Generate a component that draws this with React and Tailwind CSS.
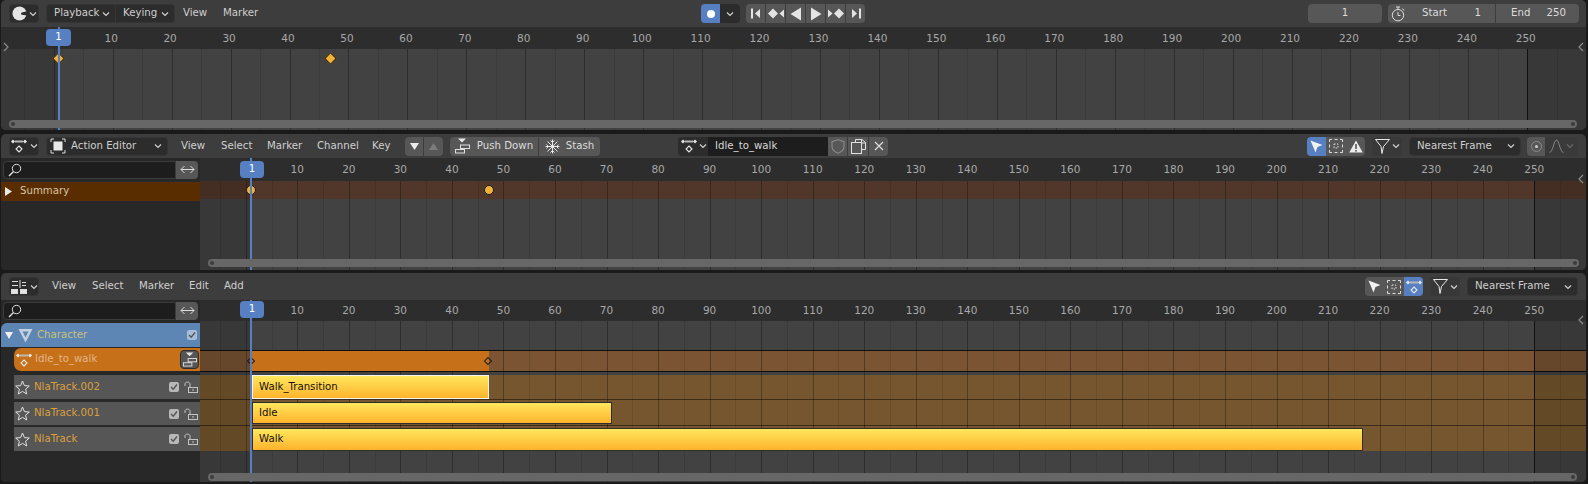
import React from "react";

const range = (a, b, step) => {
  const out = [];
  for (let i = a; i <= b; i += step) out.push(i);
  return out;
};

const Chevron = ({ className = "" }) => (
  <svg width="8" height="6" viewBox="0 0 8 6" className={className} fill="none" stroke="#d0d0d0" strokeWidth="1.2">
    <path d="M1 1.5 L4 4.5 L7 1.5" />
  </svg>
);

const ClockIcon = () => (
  <svg width="15" height="15" viewBox="0 0 16 16">
    <circle cx="8" cy="8" r="7.5" fill="#e4e4e4" />
    <path d="M16 5.5 L10.5 7 C9.3 7.5 9.3 8.8 10.5 9.3 L16 10 Z" fill="#2c2c2c" />
  </svg>
);

const DopeIcon = () => (
  <svg width="18" height="16" viewBox="0 0 18 16">
    <path d="M3 1.5 L5 3.5 L3 5.5 L1 3.5 Z M15 1.5 L17 3.5 L15 5.5 L13 3.5 Z" fill="#e6e6e6" />
    <rect x="5" y="2.5" width="8" height="2" fill="#b8b8b8" />
    <path d="M9 8 L12 11 L9 14 L6 11 Z" fill="none" stroke="#e6e6e6" strokeWidth="1.1" />
  </svg>
);

const NlaIcon = () => (
  <svg width="18" height="16" viewBox="0 0 18 16" fill="none" stroke="#dcdcdc" strokeWidth="1">
    <path d="M2 2.5 H8 M2 6.5 H8 M10 1 V9 M12 3.5 H16 M12 6.5 H16" />
    <rect x="1.5" y="10.5" width="6" height="4" fill="#e4e4e4" />
    <rect x="10.5" y="10.5" width="6" height="4" fill="#e4e4e4" />
  </svg>
);

const ActionEditorIcon = () => (
  <svg width="16" height="16" viewBox="0 0 16 16" fill="none" stroke="#dcdcdc" strokeWidth="1">
    <path d="M1 4 V1 H4 M12 1 H15 V4 M15 12 V15 H12 M4 15 H1 V12" />
    <rect x="3.5" y="3.5" width="9" height="9" fill="#e8e8e8" stroke="none" />
  </svg>
);

const Stopwatch = () => (
  <svg width="14" height="16" viewBox="0 0 14 16" fill="none" stroke="#dedede" strokeWidth="1">
    <circle cx="7" cy="9.2" r="5.7" />
    <path d="M5 1 H9 M7 1 V3.5 M7 6 V9.5 H9.5 M11.5 2.5 L13 4.5" />
  </svg>
);

const Search = () => (
  <svg width="14" height="14" viewBox="0 0 14 14" fill="none" stroke="#e0e0e0" strokeWidth="1">
    <circle cx="8.5" cy="5.5" r="4.2" />
    <path d="M5.5 8.5 L1 13" strokeWidth="1.4" />
  </svg>
);

const Swap = () => (
  <svg width="15" height="9" viewBox="0 0 15 9" fill="none" stroke="#dcdcdc" strokeWidth="1">
    <path d="M1 4.5 H14 M4.5 1 L1 4.5 L4.5 8 M10.5 1 L14 4.5 L10.5 8" />
  </svg>
);

const PushDownIcon = ({ small }) => (
  <svg width={small ? 14 : 15} height={small ? 15 : 16} viewBox="0 0 15 16" fill="none" stroke="#e0e0e0" strokeWidth="1">
    <path d="M3 0.5 H11 L7 4.5 Z" fill="#e8e8e8" stroke="none" />
    <rect x="5.5" y="7" width="9" height="3.5" />
    <rect x="0.5" y="11.5" width="9" height="3.5" />
  </svg>
);

const StashIcon = () => (
  <svg width="15" height="15" viewBox="0 0 15 15" fill="none" stroke="#e8e8e8" strokeWidth="1">
    <path d="M7.5 0.5 V14.5 M0.5 7.5 H14.5 M2.5 2.5 L12.5 12.5 M12.5 2.5 L2.5 12.5 M5.5 1.5 L7.5 3.5 L9.5 1.5 M5.5 13.5 L7.5 11.5 L9.5 13.5 M1.5 5.5 L3.5 7.5 L1.5 9.5 M13.5 5.5 L11.5 7.5 L13.5 9.5" />
  </svg>
);

const Shield = () => (
  <svg width="14" height="15" viewBox="0 0 14 15" fill="none" stroke="#8a8a8a" strokeWidth="1.1">
    <path d="M7 0.8 L13 2.6 V7.5 C13 11 10 13 7 14.2 C4 13 1 11 1 7.5 V2.6 Z" />
  </svg>
);

const CopyIcon = () => (
  <svg width="15" height="15" viewBox="0 0 15 15" fill="none" stroke="#e0e0e0" strokeWidth="1">
    <path d="M4.5 3.5 V0.5 H11 L14.5 3.5 V10.5 H10.5 M10.5 0.5 V4 H14.5" />
    <rect x="0.5" y="3.5" width="10" height="11" />
  </svg>
);

const Cross = () => (
  <svg width="10" height="10" viewBox="0 0 10 10" fill="none" stroke="#e0e0e0" strokeWidth="1.1">
    <path d="M1 1 L9 9 M9 1 L1 9" />
  </svg>
);

const Cursor = () => (
  <svg width="13" height="13" viewBox="0 0 13 13">
    <path d="M0.5 0.5 L12.5 5 L7.5 7 L5.5 12.5 Z" fill="#f2f2f2" />
  </svg>
);

const BoxSelect = () => (
  <svg width="14" height="14" viewBox="0 0 14 14" fill="none" stroke="#dcdcdc" strokeWidth="1">
    <path d="M0.5 3 V0.5 H3 M5.5 0.5 H8.5 M11 0.5 H13.5 V3 M13.5 5.5 V8.5 M13.5 11 V13.5 H11 M8.5 13.5 H5.5 M3 13.5 H0.5 V11 M0.5 8.5 V5.5" />
    <path d="M5 5 H9 V9 H5 Z" strokeDasharray="1.5 1.5" />
  </svg>
);

const Warning = () => (
  <svg width="14" height="13" viewBox="0 0 14 13">
    <path d="M7 0.5 L13.8 12.5 H0.2 Z" fill="#ececec" />
    <rect x="6.2" y="4" width="1.6" height="5" fill="#555555" />
    <rect x="6.2" y="10" width="1.6" height="1.6" fill="#555555" />
  </svg>
);

const Funnel = () => (
  <svg width="15" height="15" viewBox="0 0 15 15" fill="none" stroke="#e8e8e8" strokeWidth="1">
    <path d="M0.5 0.5 H14.5 L8.5 7.5 L7 14.5 L6 7.5 Z" />
  </svg>
);

const Falloff = () => (
  <svg width="15" height="14" viewBox="0 0 15 14" fill="none" stroke="#9a9a9a" strokeWidth="1">
    <path d="M0.5 13.5 C4 13 5 1 7.5 1 C10 1 11 13 14.5 13.5" />
  </svg>
);

const Star = () => (
  <svg width="15" height="15" viewBox="0 0 15 15" fill="none" stroke="#e2e2e2" strokeWidth="1">
    <path d="M7.5 1 L9.4 5.6 L14.3 6 L10.6 9.2 L11.7 14 L7.5 11.4 L3.3 14 L4.4 9.2 L0.7 6 L5.6 5.6 Z" />
  </svg>
);

const Lock = () => (
  <svg width="14" height="12" viewBox="0 0 14 12" fill="none" stroke="#c4c4c4" strokeWidth="1">
    <path d="M1 5 V3 C1 0.5 6 0.5 6 3 V6" />
    <rect x="4.5" y="6.5" width="9" height="5" />
    <rect x="8" y="8.5" width="2" height="1" fill="#c4c4c4" stroke="none" />
  </svg>
);

const Check = ({ dim }) => (
  <div className={`w-[10px] h-[10px] rounded-[2px] flex items-center justify-center ${dim ? "bg-[#a6bcd8]" : "bg-[#b8b8b8]"}`}>
    <svg width="8" height="8" viewBox="0 0 8 8" fill="none" stroke="#555555" strokeWidth="1.4">
      <path d="M1 4 L3.2 6.2 L7 1.5" />
    </svg>
  </div>
);

const MeshIcon = () => (
  <svg width="15" height="15" viewBox="0 0 15 15">
    <path d="M0.5 1 H14.5 L7.5 14.5 Z" fill="#c6d0dc" />
    <path d="M4.5 3.5 H10.5 L7.5 9.5 Z" fill="#5d86b5" />
  </svg>
);

const white = "#e4e4e4";
const JumpStart = () => (
  <svg width="12" height="11" viewBox="0 0 12 11" fill={white}>
    <rect x="1" y="0.5" width="2" height="10" />
    <path d="M10 1 V10 L5 5.5 Z" />
  </svg>
);
const PrevKey = () => (
  <svg width="16" height="11" viewBox="0 0 16 11" fill={white}>
    <path d="M5 0.5 L10 5.5 L5 10.5 L0 5.5 Z" />
    <path d="M16 1.5 V9.5 L11.5 5.5 Z" />
  </svg>
);
const PlayBack = () => (
  <svg width="12" height="14" viewBox="0 0 12 14" fill={white}>
    <path d="M11 0.5 V13.5 L0.5 7 Z" />
  </svg>
);
const PlayFwd = () => (
  <svg width="12" height="14" viewBox="0 0 12 14" fill={white}>
    <path d="M1 0.5 V13.5 L11.5 7 Z" />
  </svg>
);
const NextKey = () => (
  <svg width="16" height="11" viewBox="0 0 16 11" fill={white}>
    <path d="M11 0.5 L16 5.5 L11 10.5 L6 5.5 Z" />
    <path d="M0 1.5 V9.5 L4.5 5.5 Z" />
  </svg>
);
const JumpEnd = () => (
  <svg width="12" height="11" viewBox="0 0 12 11" fill={white}>
    <rect x="9" y="0.5" width="2" height="10" />
    <path d="M2 1 V10 L7 5.5 Z" />
  </svg>
);

const EditorBtn = ({ icon }) => (
  <div className="w-[30px] h-[19px] rounded-[4px] bg-[#2c2c2c] border border-[#353535] flex items-center justify-center gap-[2px] ml-[8px] shrink-0">
    {icon}
    <Chevron />
  </div>
);

const Menu = ({ items }) => (
  <div className="flex text-[#cfcfcf]">
    {items.map(([label, w]) => (
      <span key={label} className="block" style={{ width: w }}>{label}</span>
    ))}
  </div>
);

const Dropdown = ({ children, className = "" }) => (
  <div className={`h-[19px] bg-[#2c2c2c] border border-[#353535] flex items-center justify-between pr-[5px] text-[#cfcfcf] ${className}`}>
    {children}
    <Chevron />
  </div>
);

const Gray = ({ children, className = "" }) => (
  <div className={`h-[19px] bg-[#575757] flex items-center justify-center text-[#dcdcdc] ${className}`}>{children}</div>
);

// number field: label left, value right
const Field = ({ label, value, className = "" }) => (
  <div className={`h-[19px] bg-[#575757] flex items-center justify-between text-[#dcdcdc] ${className}`}>
    <span>{label}</span>
    <span>{value}</span>
  </div>
);

const SideArrow = ({ left, className }) => (
  <svg width="6" height="10" viewBox="0 0 6 10" fill="none" stroke="#8a8a8a" strokeWidth="1.2" className={`absolute z-40 ${className}`}>
    <path d={left ? "M5 1 L1 5 L5 9" : "M1 1 L5 5 L1 9"} />
  </svg>
);

// ruler labels, grid lines and range shading on one timeline
const Timeline = ({ origin, scale, start, rulerH, playX, badgeL, badgeW, badgeT, labelShift = 0, children }) => {
  const fx = (f) => origin + f * scale - start;
  const inX = fx(1);
  const outX = fx(250);
  return (
    <div className="relative h-full overflow-hidden flex flex-col">
      <div className="relative shrink-0 bg-[#2d2d2d] text-[#a8a8a8] text-[10.5px]" style={{ height: rulerH }}>
        {range(10, 250, 10).map((f) => (
          <span key={f} className="absolute top-0 bottom-0 flex items-center w-[40px] justify-center" style={{ left: fx(f) - 20 + labelShift }}>{f}</span>
        ))}
      </div>
      <div className="relative flex-1 bg-[#424242]">
        {children}
        <div className="absolute top-0 bottom-0 left-0 bg-black/15 z-[5]" style={{ width: inX }} />
        <div className="absolute top-0 bottom-0 right-0 bg-black/15 z-[5]" style={{ left: outX }} />
        {range(-10, 255, 5).map((f) => (
          <div
            key={f}
            className={`absolute top-0 bottom-0 w-px z-[6] ${f === 250 ? "bg-[#111111]" : f % 10 === 0 ? "bg-black/30" : "bg-black/10"}`}
            style={{ left: fx(f) }}
          />
        ))}
      </div>
      <div className="absolute top-0 bottom-0 w-[2px] bg-[#5680c2] z-30" style={{ left: playX - start - 1 }} />
      <div
        className="absolute h-[17px] rounded-[4px] bg-[#5680c2] text-white flex items-center justify-center z-30"
        style={{ left: badgeL - start, width: badgeW, top: badgeT }}
      >
        1
      </div>
    </div>
  );
};

const Scroll = ({ className }) => (
  <div className={`absolute h-[8px] rounded-full bg-[#676767] z-[35] flex items-center justify-between px-[2px] ${className}`}>
    <span className="w-[4px] h-[4px] rounded-full bg-[#3c3c3c]" />
    <span className="w-[4px] h-[4px] rounded-full bg-[#3c3c3c]" />
  </div>
);

const SearchRow = () => (
  <div className="flex h-[21px] items-center pl-[2px] shrink-0">
    <div className="w-[173px] h-[18px] bg-[#1d1d1d] border border-[#3c3c3c] rounded-l-[4px] flex items-center pl-[4px]">
      <Search />
    </div>
    <div className="w-[22px] h-[18px] bg-[#575757] rounded-r-[4px] flex items-center justify-center">
      <Swap />
    </div>
  </div>
);

const Diamond = ({ x, y }) => (
  <div
    className="absolute w-[9px] h-[9px] rotate-45 bg-[#f2b136] border border-[#1c1c1c] z-20"
    style={{ left: x - 4.5, top: y - 4.5 }}
  />
);

const Dot = ({ x, y }) => (
  <div
    className="absolute w-[10px] h-[10px] rounded-full bg-[#f2b136] border border-[#1c1c1c] z-20"
    style={{ left: x - 5, top: y - 5 }}
  />
);

const HollowDiamond = ({ x, y }) => (
  <div
    className="absolute w-[6px] h-[6px] rotate-45 border border-[#1c1c1c] z-20"
    style={{ left: x - 3, top: y - 3 }}
  />
);

const TimelineArea = () => (
  <section className="relative h-[130px] rounded-[5px] overflow-hidden bg-[#3d3d3d] flex flex-col shrink-0">
    <header className="h-[27px] flex items-center shrink-0">
      <div className="w-[700px] flex items-center">
        <EditorBtn icon={<ClockIcon />} />
        <div className="flex ml-[7px]">
          <Dropdown className="w-[70px] pl-[7px] rounded-l-[4px]">Playback</Dropdown>
          <Dropdown className="w-[59px] pl-[7px] rounded-r-[4px] border-l-0">Keying</Dropdown>
        </div>
        <div className="ml-[8px]">
          <Menu items={[["View", 40], ["Marker", 50]]} />
        </div>
      </div>
      <div className="w-[607px] flex items-center">
        <div className="w-[19px] h-[19px] bg-[#5680c2] rounded-l-[4px] flex items-center justify-center">
          <span className="w-[8px] h-[8px] rounded-full bg-white" />
        </div>
        <div className="w-[20px] h-[19px] bg-[#2c2c2c] rounded-r-[4px] flex items-center justify-center">
          <Chevron />
        </div>
        <div className="ml-[6px] flex rounded-[4px] overflow-hidden gap-px">
          {[<JumpStart />, <PrevKey />, <PlayBack />, <PlayFwd />, <NextKey />, <JumpEnd />].map((ic, i) => (
            <Gray key={i} className="w-[19px]">{ic}</Gray>
          ))}
        </div>
      </div>
      <Gray className="w-[74px] rounded-[4px]">1</Gray>
      <Gray className="w-[19px] ml-[6px] rounded-l-[4px]"><Stopwatch /></Gray>
      <div className="flex gap-px">
        <Field label="Start" value="1" className="w-[88px] pl-[15px] pr-[14px]" />
        <Field label="End" value="250" className="w-[83px] pl-[15px] pr-[13px] rounded-r-[4px]" />
      </div>
    </header>
    <div className="flex-1 min-h-0">
      <Timeline origin={53.76} scale={5.894} start={1} rulerH={22} playX={59} badgeL={46} badgeW={25} badgeT={2} labelShift={-1.5}>
        <Diamond x={57.5} y={9.5} />
        <Diamond x={329} y={9.5} />
      </Timeline>
    </div>
    <SideArrow className="left-[2px] top-[42px]" />
    <SideArrow left className="right-[2px] top-[42px]" />
    <Scroll className="left-[8px] right-[9px] top-[120px]" />
  </section>
);

const ActionArea = () => (
  <section className="relative h-[136px] rounded-[5px] overflow-hidden bg-[#3d3d3d] flex flex-col shrink-0 mt-[4px]">
    <header className="h-[24px] flex items-center shrink-0">
      <EditorBtn icon={<DopeIcon />} />
      <Dropdown className="w-[122px] ml-[7px] rounded-[4px] pl-[3px]">
        <span className="flex items-center gap-[5px]"><ActionEditorIcon />Action Editor</span>
      </Dropdown>
      <div className="ml-[13px] w-[224px]">
        <Menu items={[["View", 40], ["Select", 46], ["Marker", 50], ["Channel", 55], ["Key", 33]]} />
      </div>
      <div className="flex rounded-[4px] overflow-hidden gap-px">
        <Gray className="w-[18px]">
          <svg width="9" height="7" viewBox="0 0 9 7"><path d="M0 0 H9 L4.5 7 Z" fill="#ececec" /></svg>
        </Gray>
        <Gray className="w-[19px] bg-[#474747]">
          <svg width="9" height="7" viewBox="0 0 9 7"><path d="M0 7 H9 L4.5 0 Z" fill="#7c7c7c" /></svg>
        </Gray>
      </div>
      <div className="flex ml-[7px] gap-px">
        <Gray className="w-[88px] rounded-l-[4px] gap-[7px]"><PushDownIcon /><span>Push Down</span></Gray>
        <Gray className="w-[61px] rounded-r-[4px] gap-[6px]"><StashIcon /><span>Stash</span></Gray>
      </div>
      <div className="ml-[78px] w-[30px] h-[19px] rounded-l-[4px] bg-[#2c2c2c] flex items-center justify-center gap-[1px]">
        <DopeIcon />
        <Chevron />
      </div>
      <div className="w-[120px] h-[19px] bg-[#1d1d1d] text-[#d8d8d8] flex items-center pl-[7px]">Idle_to_walk</div>
      <Gray className="w-[19px]"><Shield /></Gray>
      <Gray className="w-[20px] ml-px"><CopyIcon /></Gray>
      <Gray className="w-[19px] ml-px rounded-r-[4px]"><Cross /></Gray>
      <div className="ml-[419px] flex">
        <div className="w-[19px] h-[19px] rounded-l-[4px] bg-[#5680c2] flex items-center justify-center"><Cursor /></div>
        <Gray className="w-[20px]"><BoxSelect /></Gray>
        <Gray className="w-[19px] rounded-r-[4px]"><Warning /></Gray>
      </div>
      <div className="ml-[7px] w-[30px] h-[19px] rounded-[4px] bg-[#383838] flex items-center justify-center gap-[2px]">
        <Funnel />
        <Chevron />
      </div>
      <Dropdown className="w-[112px] ml-[7px] rounded-[4px] pl-[7px]">Nearest Frame</Dropdown>
      <Gray className="w-[18px] ml-[6px] rounded-l-[4px]">
        <span className="w-[11px] h-[11px] rounded-full border border-[#8a8a8a] flex items-center justify-center">
          <span className="w-[3px] h-[3px] rounded-full bg-[#cccccc]" />
        </span>
      </Gray>
      <div className="w-[33px] h-[19px] bg-[#3a3a3a] rounded-r-[4px] flex items-center justify-center gap-[2px] opacity-80">
        <Falloff />
        <Chevron className="opacity-40" />
      </div>
    </header>
    <div className="flex-1 min-h-0 flex">
      <aside className="w-[199px] bg-[#282828] shrink-0 flex flex-col">
        <div className="h-[23px] flex items-center shrink-0"><SearchRow /></div>
        <div className="h-[19px] mt-px bg-[#5a2d00] flex items-center text-[#d8c4a8] pl-[4px] gap-[8px] shrink-0">
          <svg width="7" height="9" viewBox="0 0 7 9"><path d="M0 0 L7 4.5 L0 9 Z" fill="#e8e8e8" /></svg>
          Summary
        </div>
      </aside>
      <div className="flex-1 min-w-0">
        <Timeline origin={245.76} scale={5.154} start={200} rulerH={23} playX={251} badgeL={240} badgeW={24} badgeT={3}>
          <div className="h-[18px] bg-[#50372a]" />
          <Dot x={51} y={9} />
          <Dot x={288.5} y={9} />
        </Timeline>
      </div>
    </div>
    <SideArrow left className="right-[2px] top-[40px]" />
    <Scroll className="left-[207px] right-[7px] top-[125px]" />
  </section>
);

const trackRows = [
  { name: "NlaTrack.002", h: "h-[24px]", mt: "mt-[4px]" },
  { name: "NlaTrack.001", h: "h-[23px]", mt: "mt-[3px]" },
  { name: "NlaTrack", h: "h-[24px]", mt: "mt-[2px]" },
];

const Strip = ({ label, left, width, top, height, selected }) => (
  <div
    className={`absolute bg-gradient-to-b from-[#ffe75c] to-[#ffb32a] text-[#111111] flex items-center pl-[6px] z-20 border ${selected ? "border-[#f4f4f4]" : "border-[#2e2e2e]"}`}
    style={{ left, width, top, height }}
  >
    {label}
  </div>
);

const NlaArea = () => (
  <section className="relative h-[209px] rounded-[5px] overflow-hidden bg-[#3d3d3d] flex flex-col shrink-0 mt-[3px]">
    <header className="h-[27px] flex items-center shrink-0">
      <EditorBtn icon={<NlaIcon />} />
      <div className="ml-[13px] w-[1313px]">
        <Menu items={[["View", 40], ["Select", 47], ["Marker", 50], ["Edit", 35], ["Add", 30]]} />
      </div>
      <div className="flex">
        <Gray className="w-[19px] rounded-l-[4px]"><Cursor /></Gray>
        <Gray className="w-[20px]"><BoxSelect /></Gray>
        <div className="w-[19px] h-[19px] rounded-r-[4px] bg-[#5680c2] flex items-center justify-center"><DopeIcon /></div>
      </div>
      <div className="ml-[7px] w-[30px] h-[19px] rounded-[4px] bg-[#383838] flex items-center justify-center gap-[2px]">
        <Funnel />
        <Chevron />
      </div>
      <Dropdown className="w-[111px] ml-[7px] rounded-[4px] pl-[7px]">Nearest Frame</Dropdown>
    </header>
    <div className="flex-1 min-h-0 flex">
      <aside className="w-[199px] bg-[#282828] shrink-0 flex flex-col">
        <SearchRow />
        <div className="h-[24px] mt-[2px] bg-[#5d86b5] flex items-center pl-[4px] pr-[3px] text-[#c9c07a] rounded-tl-[6px]">
          <svg width="8" height="7" viewBox="0 0 8 7"><path d="M0 0 H8 L4 7 Z" fill="#f0f0f0" /></svg>
          <span className="ml-[5px]"><MeshIcon /></span>
          <span className="ml-[4px]">Character</span>
          <span className="ml-auto"><Check dim /></span>
        </div>
        <div className="h-[23px] mt-px ml-[13px] bg-[#c6701a] rounded-l-[7px] flex items-center text-[#e3b58a] pl-[1px]">
          <DopeIcon />
          <span className="ml-[2px]">Idle_to_walk</span>
          <span className="ml-auto mr-px w-[19px] h-[19px] rounded-[4px] bg-[#555555] border border-[#2e2e2e] flex items-center justify-center">
            <PushDownIcon small />
          </span>
        </div>
        {trackRows.map((t) => (
          <div key={t.name} className={`${t.h} ${t.mt} ml-[13px] bg-[#565656] flex items-center text-[#dba03e] pl-[1px]`}>
            <Star />
            <span className="ml-[4px]">{t.name}</span>
            <span className="ml-auto"><Check /></span>
            <span className="ml-[5px] mr-[2px]"><Lock /></span>
          </div>
        ))}
      </aside>
      <div className="flex-1 min-w-0">
        <Timeline origin={245.76} scale={5.154} start={200} rulerH={21} playX={251} badgeL={240} badgeW={24} badgeT={1}>
          <div className="mt-[29px] h-[22px] bg-[#7a5433] border-y border-[#0e0e0e]" />
          <div className="mt-[3px] h-[25px] bg-[#76562e] border-b border-[#3c2c18]" />
          <div className="h-[26px] bg-[#76562e] border-b border-[#3c2c18]" />
          <div className="h-[25px] bg-[#76562e]" />
          <div className="absolute left-[51px] w-[238px] top-[30px] h-[20px] bg-[#c6701a] z-[7]" />
          <HollowDiamond x={51} y={40} />
          <HollowDiamond x={288} y={40} />
          <Strip label="Walk_Transition" left={52} width={237} top={54} height={24} selected />
          <Strip label="Idle" left={52} width={360} top={81} height={22} />
          <Strip label="Walk" left={52} width={1111} top={107} height={23} />
        </Timeline>
      </div>
    </div>
    <SideArrow left className="right-[2px] top-[42px]" />
    <Scroll className="left-[207px] right-[9px] top-[200px]" />
  </section>
);

export default function App() {
  return (
    <div
      className="w-[1588px] h-[484px] bg-[#1a1a1a] pl-[1px] pr-[2px] flex flex-col overflow-hidden text-[10.2px] leading-none"
      style={{ fontFamily: '"DejaVu Sans", sans-serif' }}
    >
      <TimelineArea />
      <ActionArea />
      <NlaArea />
    </div>
  );
}
